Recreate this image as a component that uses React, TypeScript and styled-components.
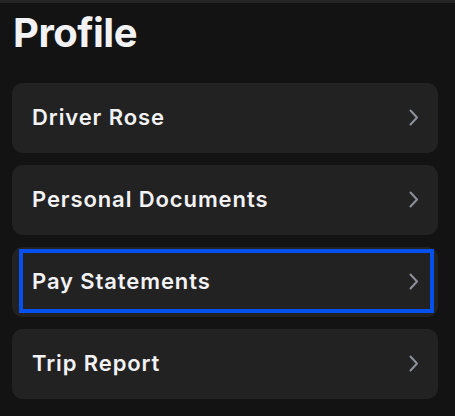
import React from 'react';
import styled, { createGlobalStyle } from 'styled-components';

const GlobalStyle = createGlobalStyle`
  html, body {
    margin: 0;
    padding: 0;
    background: #131313;
  }
  body {
    font-family: Inter, 'Noto Sans', sans-serif;
    color: #f2f2f4;
  }
`;

const Page = styled.div`
  min-height: 416px;
  border-top: 3px solid #252525;
  box-sizing: border-box;
  padding: 0 17px 0 12px;
`;

const Title = styled.h1`
  margin: 0;
  padding: 6px 0 0 1px;
  height: 72px;
  box-sizing: border-box;
  font-size: 40px;
  font-weight: 700;
  line-height: 48px;
  letter-spacing: -0.5px;
`;

const List = styled.div`
  display: flex;
  flex-direction: column;
  gap: 12px;
  margin-top: 8px;
`;

const Card = styled.div`
  height: 70px;
  box-sizing: border-box;
  background: #222222;
  border-radius: 11px;
  padding: 2px 4px 4px 7px;
`;

const Row = styled.div<{ $focused?: boolean }>`
  height: 100%;
  box-sizing: border-box;
  border: 4px solid ${p => (p.$focused ? '#0650ee' : 'transparent')};
  display: flex;
  align-items: center;
  justify-content: space-between;
  padding: 0 11px 0 9px;
`;

const Label = styled.span`
  font-size: 22px;
  font-weight: 600;
  letter-spacing: 0.9px;
`;

const Chevron = () => (
  <svg width="10" height="17" viewBox="0 0 10 17" fill="none">
    <path d="M1.5 1.5 L8 8.5 L1.5 15.5" stroke="#8c919b" strokeWidth="2" strokeLinecap="round" strokeLinejoin="round" />
  </svg>
);

const items = ['Driver Rose', 'Personal Documents', 'Pay Statements', 'Trip Report'];

export default function App() {
  return (
    <>
      <GlobalStyle />
      <Page>
        <Title>Profile</Title>
        <List>
          {items.map(item => (
            <Card key={item}>
              <Row $focused={item === 'Pay Statements'}>
                <Label>{item}</Label>
                <Chevron />
              </Row>
            </Card>
          ))}
        </List>
      </Page>
    </>
  );
}
